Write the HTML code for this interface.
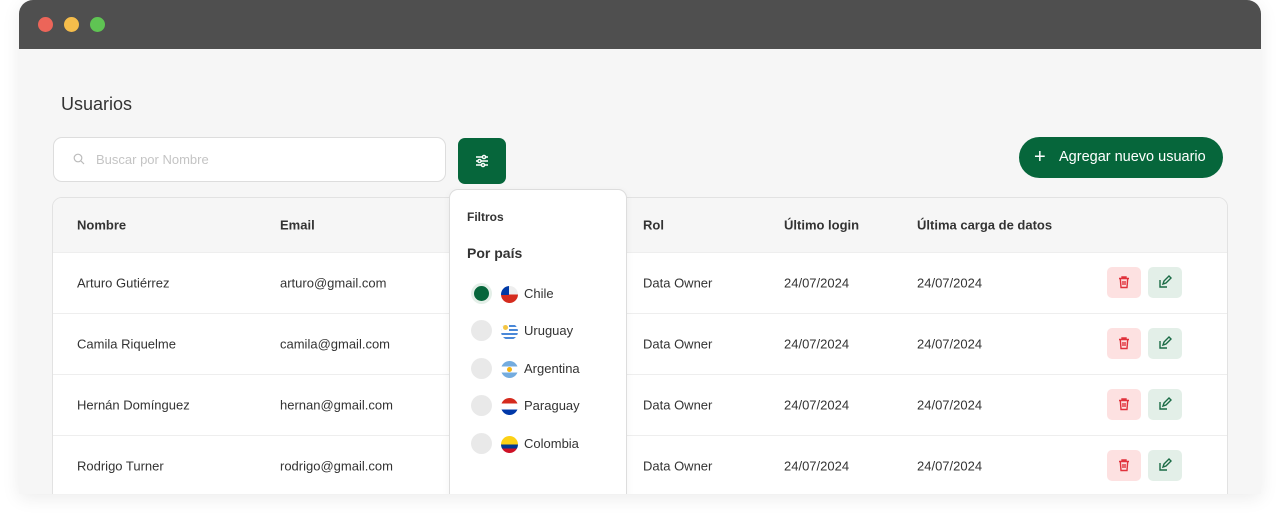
<!DOCTYPE html>
<html><head><meta charset="utf-8"><style>
*{box-sizing:border-box;margin:0;padding:0}
body{width:1280px;height:516px;background:#fff;font-family:"Liberation Sans",sans-serif;color:#333;position:relative;overflow:hidden}
.win{position:absolute;left:19px;top:0;width:1242px;height:494px;background:#f6f6f6;border-radius:14px 14px 0 0;box-shadow:0 4px 18px rgba(0,0,0,.08);overflow:hidden}
.bar{height:49px;background:#4f4f4f;position:relative}
.dot{position:absolute;top:17px;width:15px;height:15px;border-radius:50%}
.abs{position:absolute}
h1{position:absolute;left:42px;top:94px;font-size:18px;font-weight:normal;color:#333}
.search{position:absolute;left:34px;top:137px;width:393px;height:45px;background:#fff;border:1px solid #ddd;border-radius:9px}
.search span{position:absolute;left:42px;top:14px;font-size:13px;color:#c4c4c4}
.fbtn{position:absolute;left:439px;top:138px;width:48px;height:46px;background:#06663b;border-radius:7px}
.add{position:absolute;left:1000px;top:137px;width:204px;height:41px;background:#06663b;border-radius:21px;color:#fff;font-size:14.5px;line-height:41px;padding-left:40px}
.add b{position:absolute;left:15px;top:0;font-weight:normal;font-size:20px}
.card{position:absolute;left:33px;top:197px;width:1176px;height:320px;background:#fff;border:1px solid #e2e2e2;border-radius:10px;overflow:hidden}
.hdr{height:54px;background:#f6f6f6;position:relative;font-size:13px;font-weight:bold;color:#333}
.row{height:61px;border-top:1px solid #eee;position:relative;font-size:13px;color:#333}
.c{position:absolute;top:50%;transform:translateY(-50%);white-space:nowrap}
.del,.ed{position:absolute;top:14px;width:34px;height:31px;border-radius:5px}
.del{left:1054px;background:#fde1e1}.ed{left:1095px;background:#e3efe8}
.del svg,.ed svg{position:absolute;left:10px;top:8px}
.dd{position:absolute;left:430px;top:189px;width:178px;height:340px;background:#fff;border:1px solid #ddd;border-radius:9px;box-shadow:0 2px 8px rgba(0,0,0,.05)}
.dd .t{position:absolute;left:17px;top:20px;font-size:12px;font-weight:bold;color:#333}
.dd .p{position:absolute;left:17px;top:55px;font-size:14px;font-weight:bold;color:#333}
.opt{position:absolute;left:21px;height:22px;width:150px}
.rad{position:absolute;left:0;top:0;width:21px;height:21px;border-radius:50%;background:#e9e9e9}
.flag{position:absolute;left:30px;top:3px;width:17px;height:17px;border-radius:50%;overflow:hidden}
.opt span{position:absolute;left:53px;top:3px;font-size:13px;color:#333}
</style></head><body>
<div class="win">
<div class="bar"><div class="dot" style="left:19px;background:#ec6559"></div><div class="dot" style="left:45px;background:#f5bd4b"></div><div class="dot" style="left:71px;background:#5fc453"></div></div>
<h1>Usuarios</h1>
<div class="search"><svg class="abs" style="left:19px;top:15px" width="12" height="12" viewBox="0 0 12 12"><circle cx="5" cy="5" r="3.8" fill="none" stroke="#bbb" stroke-width="1.2"/><path d="M8 8l3 3" stroke="#bbb" stroke-width="1.2"/></svg><span>Buscar por Nombre</span></div>
<div class="fbtn"><svg class="abs" style="left:16px;top:15px" width="16" height="16" viewBox="0 0 16 16" fill="none" stroke="#fff" stroke-width="1.4"><path d="M2 4h12M2 8h12M2 12h12"/><circle cx="10" cy="4" r="1.6" fill="#06663b"/><circle cx="5.5" cy="8" r="1.6" fill="#06663b"/><circle cx="9" cy="12" r="1.6" fill="#06663b"/></svg></div>
<div class="add"><b>+</b>Agregar nuevo usuario</div>
<div class="card">
<div class="hdr"><div class="c" style="left:24px">Nombre</div><div class="c" style="left:227px">Email</div><div class="c" style="left:590px">Rol</div><div class="c" style="left:731px">Último login</div><div class="c" style="left:864px">Última carga de datos</div></div>
<div class="row"><div class="c" style="left:24px">Arturo Gutiérrez</div><div class="c" style="left:227px">arturo@gmail.com</div><div class="c" style="left:590px">Data Owner</div><div class="c" style="left:731px">24/07/2024</div><div class="c" style="left:864px">24/07/2024</div><div class="del"><svg width="14" height="14" viewBox="0 0 14 14" fill="none" stroke="#e0313b" stroke-width="1.4"><path d="M2 3.5h10M5 3.5V2h4v1.5M3.3 3.5l.7 9h6l.7-9M6 6v4M8 6v4"/></svg></div><div class="ed"><svg width="14" height="14" viewBox="0 0 14 14" fill="none" stroke="#1a6b45" stroke-width="1.4"><path d="M2 5v7h7M5 9l1-3 5-5 2 2-5 5z"/></svg></div></div>
<div class="row"><div class="c" style="left:24px">Camila Riquelme</div><div class="c" style="left:227px">camila@gmail.com</div><div class="c" style="left:590px">Data Owner</div><div class="c" style="left:731px">24/07/2024</div><div class="c" style="left:864px">24/07/2024</div><div class="del"><svg width="14" height="14" viewBox="0 0 14 14" fill="none" stroke="#e0313b" stroke-width="1.4"><path d="M2 3.5h10M5 3.5V2h4v1.5M3.3 3.5l.7 9h6l.7-9M6 6v4M8 6v4"/></svg></div><div class="ed"><svg width="14" height="14" viewBox="0 0 14 14" fill="none" stroke="#1a6b45" stroke-width="1.4"><path d="M2 5v7h7M5 9l1-3 5-5 2 2-5 5z"/></svg></div></div>
<div class="row"><div class="c" style="left:24px">Hernán Domínguez</div><div class="c" style="left:227px">hernan@gmail.com</div><div class="c" style="left:590px">Data Owner</div><div class="c" style="left:731px">24/07/2024</div><div class="c" style="left:864px">24/07/2024</div><div class="del"><svg width="14" height="14" viewBox="0 0 14 14" fill="none" stroke="#e0313b" stroke-width="1.4"><path d="M2 3.5h10M5 3.5V2h4v1.5M3.3 3.5l.7 9h6l.7-9M6 6v4M8 6v4"/></svg></div><div class="ed"><svg width="14" height="14" viewBox="0 0 14 14" fill="none" stroke="#1a6b45" stroke-width="1.4"><path d="M2 5v7h7M5 9l1-3 5-5 2 2-5 5z"/></svg></div></div>
<div class="row"><div class="c" style="left:24px">Rodrigo Turner</div><div class="c" style="left:227px">rodrigo@gmail.com</div><div class="c" style="left:590px">Data Owner</div><div class="c" style="left:731px">24/07/2024</div><div class="c" style="left:864px">24/07/2024</div><div class="del"><svg width="14" height="14" viewBox="0 0 14 14" fill="none" stroke="#e0313b" stroke-width="1.4"><path d="M2 3.5h10M5 3.5V2h4v1.5M3.3 3.5l.7 9h6l.7-9M6 6v4M8 6v4"/></svg></div><div class="ed"><svg width="14" height="14" viewBox="0 0 14 14" fill="none" stroke="#1a6b45" stroke-width="1.4"><path d="M2 5v7h7M5 9l1-3 5-5 2 2-5 5z"/></svg></div></div>
</div>
<div class="dd">
<div class="t">Filtros</div><div class="p">Por país</div>
<div class="opt" style="top:93px"><div class="rad" style="background:#e4efe8"><div style="position:absolute;left:3px;top:3px;width:15px;height:15px;border-radius:50%;background:#06663b"></div></div><div class="flag" style="background:linear-gradient(#eee 50%,#d52b1e 50%)"><div style="width:8px;height:8.5px;background:#0039a6"></div></div><span>Chile</span></div>
<div class="opt" style="top:130px"><div class="rad"></div><div class="flag" style="background:repeating-linear-gradient(#fff 0 2px,#4a88d8 2px 4px)"><div style="width:8px;height:8px;background:#fff;position:relative"><div style="position:absolute;left:2px;top:2px;width:5px;height:5px;border-radius:50%;background:#f4c542"></div></div></div><span>Uruguay</span></div>
<div class="opt" style="top:168px"><div class="rad"></div><div class="flag" style="background:linear-gradient(#74acdf 33%,#fff 33% 67%,#74acdf 67%)"><div style="position:absolute;left:6px;top:6px;width:5px;height:5px;border-radius:50%;background:#f6b40e"></div></div><span>Argentina</span></div>
<div class="opt" style="top:205px"><div class="rad"></div><div class="flag" style="background:linear-gradient(#d52b1e 33%,#fff 33% 67%,#0038a8 67%)"></div><span>Paraguay</span></div>
<div class="opt" style="top:243px"><div class="rad"></div><div class="flag" style="background:linear-gradient(#fcd116 50%,#003893 50% 75%,#ce1126 75%)"></div><span>Colombia</span></div>
</div>
</div>
</body></html>
